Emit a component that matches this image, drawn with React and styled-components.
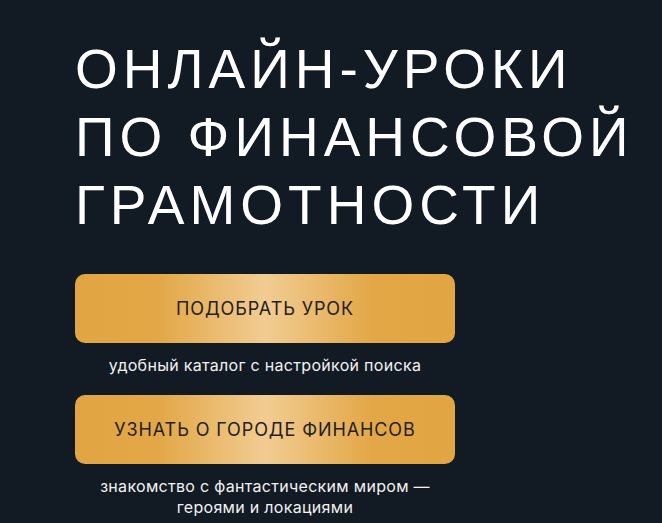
import styled, { createGlobalStyle } from "styled-components";

const GlobalStyle = createGlobalStyle`
  html, body {
    margin: 0;
    padding: 0;
    background: #121a24;
  }
`;

const Page = styled.div`
  min-height: 523px;
  background: #121a24;
  padding: 35px 0 0 75px;
  box-sizing: border-box;
  font-family: "Liberation Sans", Arial, sans-serif;
  overflow: hidden;
`;

const Title = styled.h1`
  margin: 0;
  color: #ffffff;
  font-size: 55px;
  line-height: 68px;
  font-weight: 400;
  letter-spacing: 5px;
  text-transform: uppercase;
  white-space: nowrap;
`;

const Actions = styled.div`
  display: flex;
  flex-direction: column;
  gap: 19px;
  width: 380px;
  margin-top: 35px;
`;

const Action = styled.div`
  display: flex;
  flex-direction: column;
  align-items: center;
  gap: 12px;
`;

const GoldButton = styled.button`
  width: 100%;
  height: 69px;
  border: none;
  border-radius: 10px;
  background: linear-gradient(
    90deg,
    #e2a543 0%,
    #e3a747 22%,
    #f1cc92 50%,
    #e3a747 78%,
    #e2a543 100%
  );
  color: #23201c;
  font-family: "Inter", "Liberation Sans", sans-serif;
  font-size: 18px;
  font-weight: 400;
  letter-spacing: 0.9px;
  text-transform: uppercase;
  cursor: pointer;
`;

const Caption = styled.p`
  margin: 0;
  color: #f2f2f2;
  font-family: "Inter", "Liberation Sans", sans-serif;
  font-size: 16px;
  line-height: 21px;
  letter-spacing: 0.3px;
  text-align: center;
  padding: 0 20px;
`;

export default function App() {
  return (
    <Page>
      <GlobalStyle />
      <Title>
        Онлайн-уроки
        <br />
        по финансовой
        <br />
        грамотности
      </Title>
      <Actions>
        <Action>
          <GoldButton>Подобрать урок</GoldButton>
          <Caption>удобный каталог с настройкой поиска</Caption>
        </Action>
        <Action>
          <GoldButton>Узнать о городе финансов</GoldButton>
          <Caption>знакомство с фантастическим миром — героями и локациями</Caption>
        </Action>
      </Actions>
    </Page>
  );
}
